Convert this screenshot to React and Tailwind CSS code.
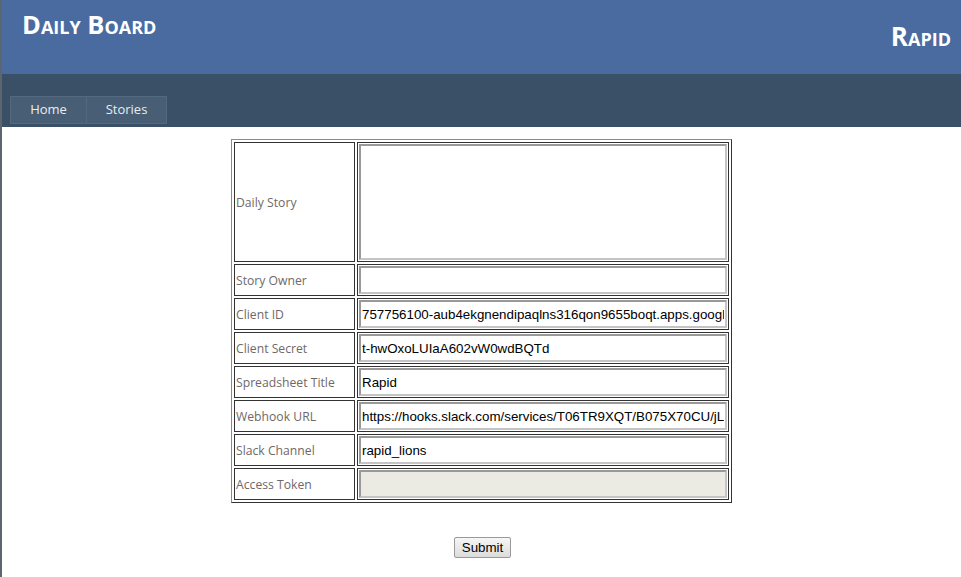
import { useState } from 'react';

// Formulaire de configuration du Daily Board.
// En-tete bleu, barre de navigation, tableau a deux colonnes, bouton Submit.

const champs = [
  { id: 'owner', label: 'Story Owner', valeur: '' },
  { id: 'client', label: 'Client ID', valeur: '757756100-aub4ekgnendipaqlns316qon9655boqt.apps.googleusercontent.com' },
  { id: 'secret', label: 'Client Secret', valeur: 't-hwOxoLUIaA602vW0wdBQTd' },
  { id: 'titre', label: 'Spreadsheet Title', valeur: 'Rapid' },
  { id: 'webhook', label: 'Webhook URL', valeur: 'https://hooks.slack.com/services/T06TR9XQT/B075X70CU/jLkq8ZxV' },
  { id: 'canal', label: 'Slack Channel', valeur: 'rapid_lions' },
];

const celluleLabel =
  'border border-[#333] px-px pt-[3px] pb-px align-middle text-left text-[12.2px] text-[#6f6868] [font-family:"Open_Sans",sans-serif] w-[121px]';
const celluleValeur = 'border border-[#333] p-px';
const champClasse =
  'block w-[368px] h-[28px] border-2 border-t-[#999] border-l-[#999] border-b-[#c4c4c4] border-r-[#c4c4c4] px-[1px] text-[13.33px] text-black [font-family:"Liberation_Sans",Arial,sans-serif] outline-none';

export default function App() {
  const [valeurs, setValeurs] = useState(
    Object.fromEntries(champs.map((c) => [c.id, c.valeur]))
  );

  return (
    <div className="min-h-[577px] border-l-2 border-[#5c6670] bg-white">
      <header className="h-[74px] bg-[#4a6b9f] flex justify-between pl-[20px] pr-[21px] text-white font-bold [font-variant:small-caps] [font-family:'Open_Sans',sans-serif]">
        <h1 className="text-[25.5px] leading-none pt-[12px]">Daily Board</h1>
        <div className="text-[26px] leading-none pt-[23px] -mr-[11px]">Rapid</div>
      </header>

      <nav className="h-[53px] bg-[#3a5066] flex items-end pb-[3px] pl-[8px]">
        <a className="w-[77px] h-[28px] flex items-center justify-center bg-[#475e75] border border-[#53697f] text-[13px] text-[#e6edf4] [font-family:'Open_Sans',sans-serif]">
          Home
        </a>
        <a className="w-[80px] h-[28px] flex items-center justify-center bg-[#475e75] border border-l-0 border-[#53697f] text-[13px] text-[#e6edf4] [font-family:'Open_Sans',sans-serif]">
          Stories
        </a>
      </nav>

      <form className="pt-[12px] flex flex-col items-center" onSubmit={(e) => e.preventDefault()}>
        <table className="border-separate border-spacing-[2px] border border-t-[#8a8a8a] border-l-[#8a8a8a] border-r-[#333] border-b-[#333]">
          <tbody>
            <tr>
              <td className={`${celluleLabel} h-[120px]`}>Daily Story</td>
              <td className={celluleValeur}>
                <textarea className={`${champClasse} bg-white h-[116px] resize-none`} />
              </td>
            </tr>
            {champs.map((champ) => (
              <tr key={champ.id}>
                <td className={`${celluleLabel} h-[32px]`}>{champ.label}</td>
                <td className={celluleValeur}>
                  <input
                    type="text"
                    value={valeurs[champ.id]}
                    onChange={(e) => setValeurs({ ...valeurs, [champ.id]: e.target.value })}
                    className={`${champClasse} bg-white`}
                  />
                </td>
              </tr>
            ))}
            <tr>
              <td className={`${celluleLabel} h-[32px]`}>Access Token</td>
              <td className={celluleValeur}>
                <input type="text" disabled className={`${champClasse} bg-[#ebebe4]`} />
              </td>
            </tr>
          </tbody>
        </table>

        <button
          type="submit"
          className="mt-[34px] ml-[2px] h-[21px] w-[57px] border border-[#9a9a9a] rounded-[2px] bg-gradient-to-b from-[#f6f6f6] to-[#dcdcdc] text-[13.33px] text-black [font-family:'Liberation_Sans',Arial,sans-serif] leading-none"
        >
          Submit
        </button>
      </form>
    </div>
  );
}
